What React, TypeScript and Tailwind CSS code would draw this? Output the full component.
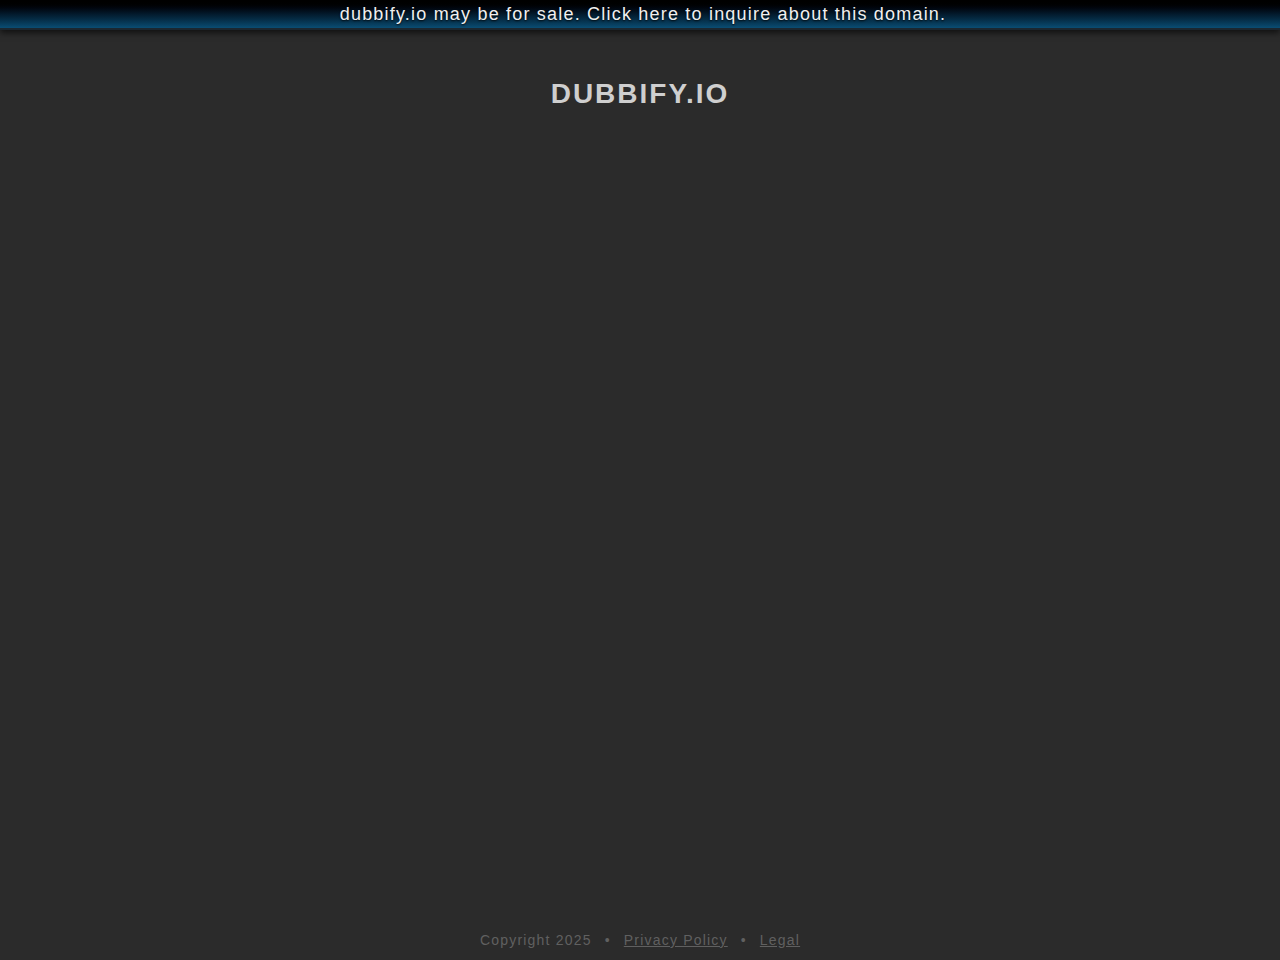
export default function App() {
  return (
    <div className="flex min-h-screen flex-col bg-[#2b2b2b] font-['Liberation_Sans',Arial,sans-serif]">
      <a
        href="#"
        className="block h-[30px] border-b-2 border-[#1b2730] bg-gradient-to-b from-[#000000] via-[#031a2c] to-[#0a4d73] pl-[6px] text-center text-[18px] leading-[28px] tracking-[1.2px] text-[#f0f0f0] no-underline shadow-[0_3px_6px_rgba(0,0,0,0.6)] [text-shadow:0_1px_2px_rgba(0,0,0,0.9)]"
      >
        dubbify.io may be for sale. Click here to inquire about this domain.
      </a>
      <h1 className="mt-[47px] text-center text-[28px] font-bold leading-[34px] tracking-[2px] text-[#cfcfcf]">
        DUBBIFY.IO
      </h1>
      <div className="flex-1" />
      <footer className="pb-[12px] text-center text-[14px] leading-[16px] tracking-[1.2px] text-[#606060]">
        <span>Copyright 2025</span>
        <span className="mx-[13px]">•</span>
        <a href="#" className="underline">Privacy Policy</a>
        <span className="mx-[13px]">•</span>
        <a href="#" className="underline">Legal</a>
      </footer>
    </div>
  );
}
